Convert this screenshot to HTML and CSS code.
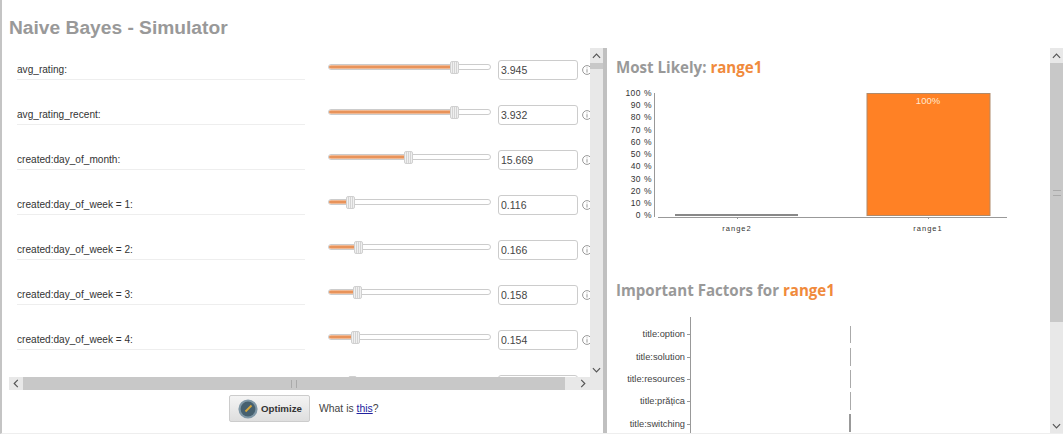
FILE: index.html
```html
<!DOCTYPE html>
<html lang="en">
<head>
    <meta charset="UTF-8">
    <meta name="viewport" content="width=device-width, initial-scale=1.0">
    <title>Naive Bayes - Simulator</title>
    <link rel="stylesheet" href="styles.css">
</head>
<body>

    <div class="page">
        <h1>Naive Bayes - Simulator</h1>

        <div class="panes">
            <div class="left">
                <div class="left-top">
                    <div class="rows">
                        <div class="row">
                            <div class="label">avg_rating:</div>
                            <div class="slider"><div class="fill" style="width: 77.6%"></div><div class="handle" style="left: 77.6%"></div></div>
                            <input class="value" type="text" value="3.945">
                            <svg class="info" viewBox="0 0 10 10"><circle cx="5" cy="5" r="4.4"/><path d="M5 2.5v.8M5 4.2v3.4"/></svg>
                        </div>
                        <div class="row">
                            <div class="label">avg_rating_recent:</div>
                            <div class="slider"><div class="fill" style="width: 77.6%"></div><div class="handle" style="left: 77.6%"></div></div>
                            <input class="value" type="text" value="3.932">
                            <svg class="info" viewBox="0 0 10 10"><circle cx="5" cy="5" r="4.4"/><path d="M5 2.5v.8M5 4.2v3.4"/></svg>
                        </div>
                        <div class="row">
                            <div class="label">created:day_of_month:</div>
                            <div class="slider"><div class="fill" style="width: 49%"></div><div class="handle" style="left: 49%"></div></div>
                            <input class="value" type="text" value="15.669">
                            <svg class="info" viewBox="0 0 10 10"><circle cx="5" cy="5" r="4.4"/><path d="M5 2.5v.8M5 4.2v3.4"/></svg>
                        </div>
                        <div class="row">
                            <div class="label">created:day_of_week = 1:</div>
                            <div class="slider"><div class="fill" style="width: 13%"></div><div class="handle" style="left: 13%"></div></div>
                            <input class="value" type="text" value="0.116">
                            <svg class="info" viewBox="0 0 10 10"><circle cx="5" cy="5" r="4.4"/><path d="M5 2.5v.8M5 4.2v3.4"/></svg>
                        </div>
                        <div class="row">
                            <div class="label">created:day_of_week = 2:</div>
                            <div class="slider"><div class="fill" style="width: 18.2%"></div><div class="handle" style="left: 18.2%"></div></div>
                            <input class="value" type="text" value="0.166">
                            <svg class="info" viewBox="0 0 10 10"><circle cx="5" cy="5" r="4.4"/><path d="M5 2.5v.8M5 4.2v3.4"/></svg>
                        </div>
                        <div class="row">
                            <div class="label">created:day_of_week = 3:</div>
                            <div class="slider"><div class="fill" style="width: 17.5%"></div><div class="handle" style="left: 17.5%"></div></div>
                            <input class="value" type="text" value="0.158">
                            <svg class="info" viewBox="0 0 10 10"><circle cx="5" cy="5" r="4.4"/><path d="M5 2.5v.8M5 4.2v3.4"/></svg>
                        </div>
                        <div class="row">
                            <div class="label">created:day_of_week = 4:</div>
                            <div class="slider"><div class="fill" style="width: 16.3%"></div><div class="handle" style="left: 16.3%"></div></div>
                            <input class="value" type="text" value="0.154">
                            <svg class="info" viewBox="0 0 10 10"><circle cx="5" cy="5" r="4.4"/><path d="M5 2.5v.8M5 4.2v3.4"/></svg>
                        </div>
                        <div class="row">
                            <div class="label"></div>
                            <div class="slider"><div class="fill" style="width: 14%"></div><div class="handle" style="left: 14%"></div></div>
                            <input class="value" type="text" value="">
                        </div>
                    </div>
                    <div class="vbar">
                        <div class="arrow"><svg viewBox="0 0 10 6"><path d="M1 5l4-4 4 4"/></svg></div>
                        <div class="vthumb-small"></div>
                        <div class="vtrack"></div>
                        <div class="arrow"><svg viewBox="0 0 10 6"><path d="M1 1l4 4 4-4"/></svg></div>
                    </div>
                </div>

                <div class="hbar">
                    <div class="harrow"><svg viewBox="0 0 6 10"><path d="M5 1L1 5l4 4"/></svg></div>
                    <div class="hthumb"><span class="grip-v"></span></div>
                    <div class="htrack"><svg viewBox="0 0 6 10"><path d="M1 1l4 4-4 4"/></svg></div>
                </div>

                <div class="actions">
                    <button class="optimize">
                        <svg viewBox="0 0 20 20">
                            <circle cx="10" cy="10" r="9.6" fill="#7f97a6"/>
                            <circle cx="10" cy="10" r="7.4" fill="#46606f"/>
                            <path d="M7.5 12.5L13.5 6.5" stroke="#d9a93a" stroke-width="1.8"/>
                        </svg>
                        Optimize
                    </button>
                    <span class="what">What is <a href="#">this</a>?</span>
                </div>
            </div>

            <div class="splitter"></div>

            <div class="right">
                <h2 class="likely">Most Likely: <span>range1</span></h2>
                <svg class="chart" viewBox="607 85 443 150">
                    <text x="652" y="96" class="tick">100 %</text>
                    <text x="652" y="108" class="tick">90 %</text>
                    <text x="652" y="120" class="tick">80 %</text>
                    <text x="652" y="133" class="tick">70 %</text>
                    <text x="652" y="145" class="tick">60 %</text>
                    <text x="652" y="157" class="tick">50 %</text>
                    <text x="652" y="169" class="tick">40 %</text>
                    <text x="652" y="182" class="tick">30 %</text>
                    <text x="652" y="194" class="tick">20 %</text>
                    <text x="652" y="206" class="tick">10 %</text>
                    <text x="652" y="218" class="tick">0 %</text>
                    <path class="axis" d="M654.5 93v124M658 217.5h349M737.5 217v2M928.5 217v2"/>
                    <rect x="675" y="214" width="123" height="2" fill="#888"/>
                    <rect x="867" y="93.5" width="123" height="122" fill="#ff8125" stroke="#b08a6a"/>
                    <text x="928" y="104" class="bar-label">100%</text>
                    <text x="737" y="231" class="cat">range2</text>
                    <text x="928" y="231" class="cat">range1</text>
                </svg>

                <h2 class="factors">Important Factors for <span>range1</span></h2>
                <svg class="chart-factors" viewBox="607 317 443 117">
                    <path class="axis" d="M690.5 317v117M687 334.5h3M687 357.5h3M687 379.5h3M687 401.5h3M687 424.5h3"/>
                    <text x="685" y="337" class="factor">title:option</text>
                    <text x="685" y="360" class="factor">title:solution</text>
                    <text x="685" y="382" class="factor">title:resources</text>
                    <text x="685" y="404" class="factor">title:prățica</text>
                    <text x="685" y="427" class="factor">title:switching</text>
                    <path class="impact" d="M850.5 326v17M850.5 348v18M850.5 370v18M850.5 392v18"/>
                    <path class="impact strong" d="M850 414v18"/>
                </svg>
            </div>

            <div class="vbar page-bar">
                <div class="arrow"><svg viewBox="0 0 10 6"><path d="M1 5l4-4 4 4"/></svg></div>
                <div class="vthumb"><span class="grip-h"></span></div>
                <div class="vtrack"></div>
                <div class="arrow"><svg viewBox="0 0 10 6"><path d="M1 1l4 4 4-4"/></svg></div>
            </div>
        </div>
    </div>

</body>
</html>
```

FILE: styles.css
```css
html, body {
    margin: 0;
    height: 100%;
    background-color: #fff;
    overflow: hidden;
}

.page {
    height: 433px;
    border-left: 2px solid #c4c4c4;
    border-bottom: 1px solid #eee;
    font-family: "Liberation Sans", Arial, sans-serif;
    color: #333;
    overflow: hidden;
}

h1 {
    margin: 0;
    height: 48px;
    padding: 18px 0 0 7px;
    box-sizing: border-box;
    font-size: 19.2px;
    line-height: 20px;
    color: #999;
}

.panes {
    display: flex;
    height: 385px;
}

.left {
    width: 601px;
    flex: none;
}

.left-top {
    display: flex;
    height: 329px;
}

.rows {
    width: 588px;
    padding: 12px 0 0 15px;
    box-sizing: border-box;
    overflow: hidden;
}

.row {
    display: flex;
    align-items: flex-start;
    height: 20px;
    margin-bottom: 25px;
}

.label {
    width: 288px;
    height: 19px;
    flex: none;
    border-bottom: 1px solid #eee;
    font-size: 10.1px;
    line-height: 20px;
    color: #333;
}

.slider {
    position: relative;
    width: 161px;
    height: 4px;
    flex: none;
    margin: 4px 7px 0 23px;
    border: 1px solid #ccc;
    border-radius: 3px;
    background-color: #fff;
}

.fill {
    height: 4px;
    border-radius: 2px;
    background: linear-gradient(#f6d3bb, #e8935a 30%, #e8935a 70%, #f6d3bb);
}

.handle {
    position: absolute;
    top: -4px;
    width: 7px;
    height: 11px;
    margin-left: -4px;
    border: 1px solid #d0d0d0;
    border-radius: 2px;
    background: repeating-linear-gradient(90deg, #f0f0f0 0, #f0f0f0 1px, #d4d4d4 1px, #d4d4d4 2px);
}

.value {
    width: 80px;
    height: 20px;
    flex: none;
    box-sizing: border-box;
    padding: 0 2px;
    border: 1px solid #ccc;
    border-radius: 3px;
    font-family: "Liberation Sans", Arial, sans-serif;
    font-size: 10.5px;
    color: #444;
}

.info {
    width: 10px;
    height: 10px;
    flex: none;
    margin: 5px 0 0 4px;
    fill: none;
    stroke: #999;
    stroke-width: 1;
}

.vbar {
    display: flex;
    flex-direction: column;
    width: 13px;
    flex: none;
    background-color: #e8e8e8;
}

.arrow {
    height: 15px;
    flex: none;
    display: flex;
    align-items: center;
    justify-content: center;
}

.arrow svg, .harrow svg, .htrack svg {
    fill: none;
    stroke: #555;
    stroke-width: 1.3;
}

.arrow svg {
    width: 9px;
    height: 6px;
}

.harrow svg, .htrack svg {
    width: 6px;
    height: 9px;
}

.vthumb-small {
    height: 6px;
    flex: none;
    background-color: #c8c8c8;
}

.vthumb {
    height: 259px;
    flex: none;
    display: flex;
    align-items: center;
    justify-content: center;
    background-color: #c8c8c8;
}

.vtrack {
    flex: 1;
}

.grip-h {
    width: 8px;
    height: 4px;
    border-top: 1px solid #aaa;
    border-bottom: 1px solid #aaa;
}

.grip-v {
    width: 4px;
    height: 8px;
    border-left: 1px solid #aaa;
    border-right: 1px solid #aaa;
}

.hbar {
    display: flex;
    height: 13px;
    margin-left: 7px;
    background-color: #e8e8e8;
}

.harrow {
    width: 14px;
    flex: none;
    display: flex;
    align-items: center;
    justify-content: center;
}

.hthumb {
    width: 542px;
    flex: none;
    display: flex;
    align-items: center;
    justify-content: center;
    background-color: #c8c8c8;
}

.htrack {
    flex: 1;
    display: flex;
    align-items: center;
    justify-content: flex-start;
    padding-left: 15px;
}

.actions {
    display: flex;
    align-items: center;
    gap: 9px;
    margin: 5px 0 0 227px;
}

.optimize {
    display: flex;
    align-items: center;
    gap: 3px;
    width: 81px;
    height: 27px;
    padding: 0 0 0 8px;
    border: 1px solid #ccc;
    border-radius: 2px;
    background: linear-gradient(#f4f4f4, #dedede);
    font-family: "Liberation Sans", Arial, sans-serif;
    font-size: 9.7px;
    font-weight: bold;
    color: #333;
}

.optimize svg {
    width: 20px;
    height: 20px;
    flex: none;
}

.what {
    font-size: 10.4px;
    color: #444;
}

.what a {
    color: #22229e;
}

.splitter {
    width: 4px;
    flex: none;
    background-color: #c0c0c0;
}

.right {
    width: 443px;
    flex: none;
    overflow: hidden;
}

h2 {
    margin: 0;
    padding-left: 9px;
    font-family: "Open Sans", sans-serif;
    font-size: 15.1px;
    line-height: 20px;
    font-weight: 700;
    color: #999;
}

h2 span {
    color: #f08a3c;
}

.likely {
    padding-top: 9px;
    height: 28px;
}

.chart {
    display: block;
    width: 443px;
    height: 150px;
}

.factors {
    padding-top: 45px;
    height: 37px;
}

.chart-factors {
    display: block;
    width: 443px;
    height: 117px;
}

.tick {
    font-family: "Liberation Sans", sans-serif;
    font-size: 8.5px;
    letter-spacing: 0.5px;
    text-anchor: end;
    fill: #333;
}

.cat {
    font-family: "Liberation Sans", sans-serif;
    font-size: 7.5px;
    letter-spacing: 1px;
    text-anchor: middle;
    fill: #333;
}

.bar-label {
    font-family: "Liberation Sans", sans-serif;
    font-size: 9.5px;
    text-anchor: middle;
    fill: #ffe9d2;
}

.factor {
    font-family: "Liberation Sans", sans-serif;
    font-size: 9.3px;
    text-anchor: end;
    fill: #444;
}

.axis {
    fill: none;
    stroke: #999;
    stroke-width: 1;
}

.impact {
    fill: none;
    stroke: #aaa;
    stroke-width: 1;
}

.impact.strong {
    stroke: #777;
    stroke-width: 1.5;
}
```
